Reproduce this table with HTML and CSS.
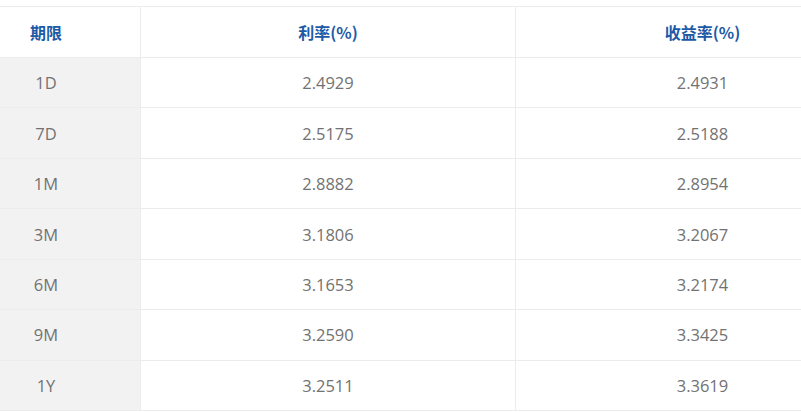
FILE: index.html
```html
<!DOCTYPE html>
<html lang="zh">
<head>
<meta charset="utf-8">
<link rel="stylesheet" href="styles.css">
</head>
<body>
<div class="wrap">
  <div class="table">
    <div class="cell head first">期限</div>
    <div class="cell head">利率(%)</div>
    <div class="cell head">收益率(%)</div>

    <div class="cell first">1D</div><div class="cell">2.4929</div><div class="cell">2.4931</div>
    <div class="cell first">7D</div><div class="cell">2.5175</div><div class="cell">2.5188</div>
    <div class="cell first">1M</div><div class="cell">2.8882</div><div class="cell">2.8954</div>
    <div class="cell first">3M</div><div class="cell">3.1806</div><div class="cell">3.2067</div>
    <div class="cell first">6M</div><div class="cell">3.1653</div><div class="cell">3.2174</div>
    <div class="cell first">9M</div><div class="cell">3.2590</div><div class="cell">3.3425</div>
    <div class="cell first">1Y</div><div class="cell">3.2511</div><div class="cell">3.3619</div>
  </div>
</div>
</body>
</html>
```

FILE: styles.css
```css
html, body {
  margin: 0;
  padding: 0;
  background: #fff;
}
.wrap {
  width: 801px;
  height: 412px;
  overflow: hidden;
  padding-top: 6px;
  box-sizing: border-box;
}
.table {
  display: grid;
  grid-template-columns: 189px 375px 374px;
  grid-template-rows: 51px repeat(7, 50.45px);
  margin-left: -48px;
  width: 938px;
  border-top: 1px solid #ececec;
  font-family: "Open Sans", "Noto Sans CJK SC", sans-serif;
}
.cell {
  display: flex;
  align-items: center;
  justify-content: center;
  border-bottom: 1px solid #ececec;
  border-right: 1px solid #ececec;
  box-sizing: border-box;
  font-size: 16.5px;
  color: #727272;
}
.cell.first {
  background: #f2f2f2;
}
.cell.head {
  font-family: "Noto Sans CJK SC", sans-serif;
  font-weight: 700;
  font-size: 16px;
  color: #1c5aa6;
  background: #fff;
}
```
